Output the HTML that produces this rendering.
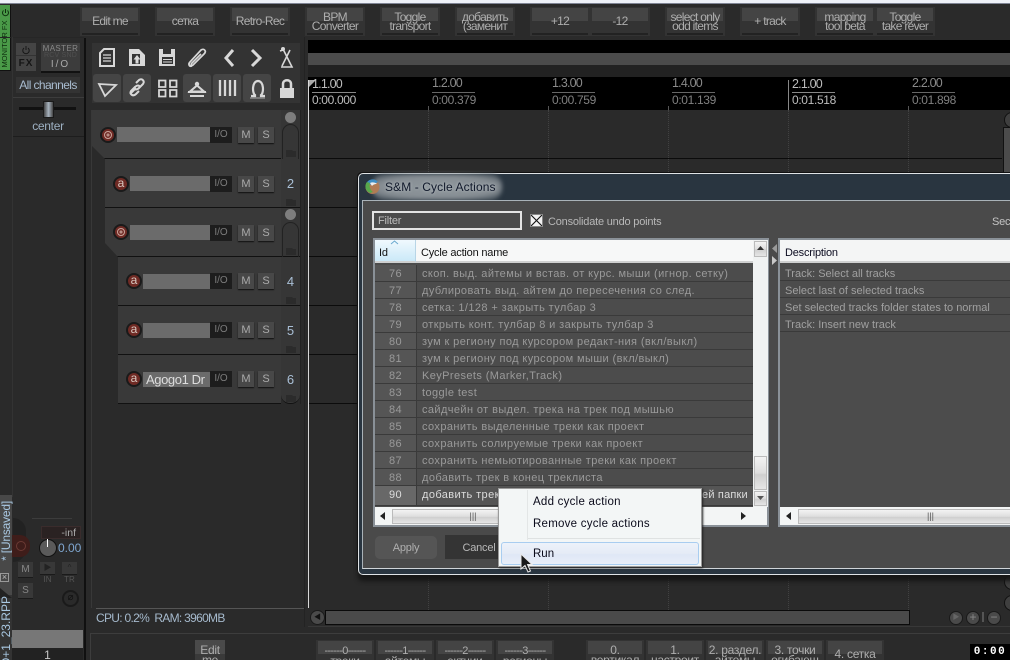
<!DOCTYPE html>
<html><head><meta charset="utf-8"><style>
html,body{margin:0;padding:0;background:#2a2a2a}
#p{position:relative;width:1010px;height:660px;overflow:hidden;background:#2a2a2a;font-family:"Liberation Sans","Noto Sans CJK SC",sans-serif;font-size:12px;color:#aaa}
#p div,#p svg{position:absolute}
.b{background:#333;text-align:center;color:#aeaeae;line-height:9px;font-size:12px;letter-spacing:-.7px}
.b i{position:absolute;left:2px;right:2px;top:1px;height:13px;background:#444}
.b u{position:absolute;left:2px;right:2px;bottom:1px;height:2px;background:#222}
.b span{position:relative;display:block;white-space:nowrap}
.c{line-height:10px;letter-spacing:-.3px}
.c em{font-style:normal;font-size:11px;letter-spacing:-.7px}
.tr{background:#393939;border-bottom:1px solid #111}
.nm{background:#6b6b6b;height:15px}
.io{background:#1d1d1d;width:22px;height:16px;text-align:center;color:#7c7c7c;font-size:10px;line-height:16px}
.ms{width:16px;height:16px;background:#484848;box-shadow:0 1px 1px #111;text-align:center;color:#aaa;font-size:11px;line-height:16px}
.rc{width:12px;height:12px;border-radius:50%;background:#6f2a24;border:2px solid #1a1a1a;color:#d8c8c0;text-align:center;line-height:11px;font-size:12px}
.n{left:281px;width:19px;text-align:center;color:#a9bfd6;font-size:13px}
.f{left:281px;width:19px;background:#363636}
.r{left:375px;width:378px;height:16px;border-bottom:1px solid #3a3a3a;background:#4c4c4c;color:#9a9a9a;font-size:11px;line-height:18px;white-space:nowrap;letter-spacing:.4px}
.r b{position:absolute;left:0;width:41px;height:16px;text-align:center;font-weight:normal;background:#555;border-right:1px solid #3a3a3a}
.r span{position:absolute;left:47px}
.d{left:780px;width:230px;height:16px;border-bottom:1px solid #3a3a3a;color:#a0a0a0;font-size:11px;line-height:18px;padding-left:5px;white-space:nowrap;box-sizing:border-box}
.rl{color:#8a8a8a;font-size:12.500px;white-space:nowrap;letter-spacing:-.8px}
.r2{color:#808080;font-size:12px;white-space:nowrap;letter-spacing:-.35px}
.t{width:1px;height:5px;background:#555;top:106px}
.v{width:0;border-left:1px dotted #414141;top:110px;height:500px}
.sb{background:linear-gradient(#f3f3f3,#dedede 50%,#cfcfcf 55%,#e6e6e6);border:1px solid #bbb;box-sizing:border-box}
.hb{background:#454545;border-radius:3px}
.dt{font-size:11px;letter-spacing:-.2px;line-height:14px;white-space:nowrap}
</style></head><body><div id="p">

<!-- top strip -->
<div style="left:0;top:0;width:1010px;height:3px;background:#eef1f8"></div>
<div style="left:0;top:3px;width:1010px;height:1px;background:#7f8494"></div>

<!-- top toolbar -->
<div class="b" style="left:80px;top:7px;width:60px;height:29px"><i></i><u></u><span style="top:10px">Edit me</span></div>
<div class="b" style="left:155px;top:7px;width:60px;height:29px"><i></i><u></u><span style="top:10px">сетка</span></div>
<div class="b" style="left:230px;top:7px;width:60px;height:29px"><i></i><u></u><span style="top:10px">Retro-Rec</span></div>
<div class="b" style="left:305px;top:7px;width:60px;height:29px"><i></i><u></u><span style="top:6px">BPM<br>Converter</span></div>
<div class="b" style="left:380px;top:7px;width:60px;height:29px"><i></i><u></u><span style="top:6px">Toggle<br>transport</span></div>
<div class="b" style="left:455px;top:7px;width:60px;height:29px"><i></i><u></u><span style="top:6px">добавить<br>(заменит</span></div>
<div class="b" style="left:530px;top:7px;width:60px;height:29px"><i></i><u></u><span style="top:10px">+12</span></div>
<div class="b" style="left:590px;top:7px;width:60px;height:29px"><i></i><u></u><span style="top:10px">-12</span></div>
<div class="b" style="left:665px;top:7px;width:60px;height:29px"><i></i><u></u><span style="top:6px">select only<br>odd items</span></div>
<div class="b" style="left:740px;top:7px;width:60px;height:29px"><i></i><u></u><span style="top:10px">+ track</span></div>
<div class="b" style="left:815px;top:7px;width:60px;height:29px"><i></i><u></u><span style="top:6px">mapping<br>tool beta</span></div>
<div class="b" style="left:875px;top:7px;width:60px;height:29px"><i></i><u></u><span style="top:6px">Toggle<br>take rever</span></div>

<!-- monitor fx -->
<div style="left:0;top:5px;width:10px;height:65px;background:#4a9a48;border-right:1px solid #111;border-bottom:1px solid #111"></div>
<div style="left:-22px;top:39px;width:54px;height:10px;transform:rotate(-90deg);color:#0d2c0d;font-size:7.500px;line-height:10px;text-align:center">MONITOR FX</div>
<svg style="left:1px;top:8px" width="9" height="9" fill="none" stroke="#0d2c0d"><path d="M2.500 2.500a3 3 0 1 0 4 0M4.500 1v4"/></svg>

<!-- dark dividers -->
<div style="left:84px;top:38px;width:2px;height:622px;background:#101010"></div>
<div style="left:0;top:37px;width:84px;height:1px;background:#262626"></div>

<!-- master strip -->
<div style="left:16px;top:43px;width:20px;height:28px;background:#444"></div>
<div style="left:16px;top:55px;width:20px;height:1px;background:#333"></div>
<div style="left:16px;top:57px;width:20px;text-align:center;color:#151515;font-size:10px;letter-spacing:1px;line-height:13px;font-weight:bold">FX</div>
<svg style="left:21px;top:45px" width="10" height="10" fill="none" stroke="#161616"><path d="M3 3a3.200 3.200 0 1 0 4 0M5 1v4"/></svg>
<div style="left:41px;top:43px;width:39px;height:28px;background:#3c3c3c;border-bottom:2px solid #111"></div>
<div style="left:41px;top:44px;width:39px;text-align:center;color:#888;font-size:8px;line-height:9px;letter-spacing:.4px">MASTER</div>
<div style="left:41px;top:52px;width:39px;text-align:center;color:#505050;font-size:7px;line-height:8px;letter-spacing:.2px">RCV SND</div>
<div style="left:41px;top:59px;width:39px;text-align:center;color:#aaa;font-size:10px;line-height:11px;letter-spacing:2px">I/O</div>
<div style="left:16px;top:77px;width:64px;height:16px;background:#333;text-align:center;color:#a9bcd0;font-size:12px;line-height:16px;white-space:nowrap;letter-spacing:-.6px">All channels</div>
<div style="left:12px;top:97px;width:72px;height:1px;background:#3c3c3c"></div>
<div style="left:19px;top:107px;width:57px;height:3px;background:#111"></div>
<div style="left:43px;top:101px;width:9px;height:15px;background:linear-gradient(90deg,#444,#a8b4c0 50%,#444);border:1px solid #1a1a1a"></div>
<div style="left:12px;top:119px;width:72px;text-align:center;color:#9db0c2;font-size:12px;line-height:14px;letter-spacing:-.3px">center</div>
<div style="left:12px;top:136px;width:72px;height:1px;background:#1d1d1d"></div>
<div style="left:12px;top:37px;width:1px;height:460px;background:#333"></div>

<!-- panel toolbar -->
<div style="left:92px;top:43px;width:208px;height:60px;background:#333"></div>
<div class="hb" style="left:93px;top:74px;width:28px;height:28px"></div>
<div class="hb" style="left:123px;top:74px;width:28px;height:28px"></div>
<div class="hb" style="left:183px;top:74px;width:28px;height:28px"></div>
<div class="hb" style="left:213px;top:74px;width:28px;height:28px"></div>
<div class="hb" style="left:243px;top:74px;width:28px;height:28px"></div>
<svg style="left:92px;top:43px" width="208" height="60" viewBox="92 43 208 60" fill="none" stroke="#d8d8d8" stroke-width="2">
<path d="M100 53l4-4h10v17h-14z"/><path d="M103 55h8M103 58h8M103 61h8" stroke-width="1.300"/>
<path d="M129 49h10l6 6v11h-16z" fill="#d8d8d8" stroke="none"/><path d="M132 54h8v10h-8z" fill="#333" stroke="none"/><path d="M137 55l3.500 4.500h-2v4h-3v-4h-2z" fill="#d8d8d8" stroke="none"/>
<path d="M159 49h16v17h-16z" fill="#d8d8d8" stroke="none"/><path d="M163 49h8v5h-8zM162 57h11v7h-11z" fill="#333" stroke="none"/><path d="M163 59.500h9M163 62h9" stroke-width="1"/>
<path d="M192 66c-3 1-4-2-2-4l11-12c3-2 6 1 3 4l-11 11c-1 1-3 0-1-2l9-9" stroke-width="1.700"/>
<path d="M233 50l-7 8 7 8" stroke-width="3"/><path d="M252 50l8 8-8 8" stroke-width="3"/>
<path d="M283 49l9 18h-11M290 50l-8 16M283 50l-3 1" stroke-width="1.600"/><circle cx="283" cy="49" r="2" fill="#d8d8d8" stroke="none"/>
<path d="M99 84l17 1-11 11z" stroke-width="1.800"/>
<path d="M130 94l6-6M136 83l3-3c3-2 6 1 4 4l-4 4c-2 2-4 2-5 0M139 91l-3 3c-3 3-7 0-5-3l4-4c2-2 4-2 5 0" stroke-width="2"/>
<path d="M159 80.500h6.500v6.500h-6.500zM170 80.500h6.500v6.500h-6.500zM159 90h6.500v6.500h-6.500zM170 90h6.500v6.500h-6.500z" stroke-width="1.800"/>
<path d="M190 91.500l7-6 7 6h-14z" fill="none"/><circle cx="197" cy="84" r="2.200" fill="#d8d8d8" stroke="none"/><path d="M188 92h18M190 96h14" stroke-width="2"/>
<path d="M220 80v16M225 80v16M230 80v16M235 80v16" stroke-width="2.300"/>
<path d="M251 96h4v-1c-3-2-3-14 3-14s6 12 3 14v1h4" stroke-width="2.200"/><path d="M250 98h15" stroke-width="1" stroke="#aaa"/>
<rect x="280" y="88" width="14" height="10" fill="#d8d8d8" stroke="none"/><path d="M283 88v-4c0-5 8-5 8 0v4" stroke-width="2.500"/>
</svg>

<!-- black/gray bands -->
<div style="left:308px;top:40px;width:702px;height:13px;background:#000"></div>
<div style="left:308px;top:53px;width:702px;height:12px;background:#4b4b4b"></div>
<div style="left:308px;top:65px;width:702px;height:12px;background:#222"></div>
<div style="left:308px;top:77px;width:702px;height:33px;background:#000"></div>

<!-- ruler -->
<svg style="left:308px;top:80px" width="9" height="8"><path d="M0 0h8L0 8z" fill="#aaa"/></svg>
<div class="rl" style="left:312px;top:77px;color:#bdbdbd">1.1.00</div>
<div style="left:312px;top:92px;width:44px;height:1px;background:#888"></div>
<div class="r2" style="left:312px;top:93px;color:#bdbdbd">0:00.000</div>
<div class="rl" style="left:432px;top:76px">1.2.00</div><div style="left:432px;top:92px;width:43px;height:1px;background:#666"></div><div class="r2" style="left:432px;top:93px">0:00.379</div>
<div class="rl" style="left:552px;top:76px">1.3.00</div><div style="left:552px;top:92px;width:43px;height:1px;background:#666"></div><div class="r2" style="left:552px;top:93px">0:00.759</div>
<div class="rl" style="left:672px;top:76px">1.4.00</div><div style="left:672px;top:92px;width:43px;height:1px;background:#666"></div><div class="r2" style="left:672px;top:93px">0:01.139</div>
<div class="rl" style="left:792px;top:77px;color:#bdbdbd">2.1.00</div><div style="left:792px;top:92px;width:43px;height:1px;background:#888"></div><div class="r2" style="left:792px;top:93px;color:#bdbdbd">0:01.518</div>
<div class="rl" style="left:912px;top:76px">2.2.00</div><div style="left:912px;top:92px;width:43px;height:1px;background:#666"></div><div class="r2" style="left:912px;top:93px">0:01.898</div>
<div style="left:788px;top:80px;width:1px;height:30px;background:#888"></div>
<div class="t" style="left:428px"></div><div class="t" style="left:548px"></div><div class="t" style="left:668px"></div><div class="t" style="left:908px"></div>

<!-- arrangement -->
<div class="v" style="left:428px"></div><div class="v" style="left:548px"></div><div class="v" style="left:668px"></div><div class="v" style="left:788px"></div><div class="v" style="left:908px"></div>
<div style="left:308px;top:80px;width:1px;height:528px;background:#d8d8d8"></div>
<div style="left:309px;top:158px;width:693px;height:1px;background:#0b0b0b"></div>
<div style="left:309px;top:207px;width:693px;height:1px;background:#0b0b0b"></div>
<div style="left:309px;top:256px;width:50px;height:1px;background:#0b0b0b"></div>
<div style="left:309px;top:305px;width:50px;height:1px;background:#0b0b0b"></div>
<div style="left:309px;top:354px;width:50px;height:1px;background:#0b0b0b"></div>
<div style="left:309px;top:403px;width:50px;height:1px;background:#0b0b0b"></div>
<div style="left:304px;top:37px;width:1px;height:590px;background:#232323"></div>
<div style="left:1003px;top:127px;width:7px;height:46px;background:#4b4b4b;border:1px solid #111;border-right:0;box-sizing:border-box"></div>
<div style="left:1004px;top:112px;width:14px;height:14px;border-radius:50%;background:#3f3f3f;border:1px solid #111"></div>
<div style="left:1004px;top:574px;width:14px;height:14px;border-radius:50%;background:#3f3f3f;border:1px solid #111"></div>
<div style="left:1004px;top:595px;width:14px;height:14px;border-radius:50%;background:#3f3f3f;border:1px solid #111"></div>

<!-- tracks -->
<div style="left:300px;top:110px;width:1px;height:294px;background:#222"></div>

<div class="tr" style="left:91px;top:110px;width:190px;height:48px;clip-path:polygon(0 0,100% 0,100% 100%,14px 100%,0 35px)"></div>
<div class="f" style="top:110px;height:49px"></div>
<div style="left:285px;top:112px;width:11px;height:11px;border-radius:50%;background:#7e7e7e"></div>
<div style="left:282px;top:124px;width:17px;height:35px;border:1px solid #222;border-bottom:0;border-radius:9px 9px 0 0;box-sizing:border-box"></div>
<div class="rc" style="left:100px;top:127px"><svg style="left:1px;top:1px" width="10" height="10" fill="none" stroke="#c9a49c"><circle cx="5" cy="5" r="3.500"/><circle cx="5" cy="5" r="1"/></svg></div>
<div class="nm" style="left:117px;top:127px;width:93px"></div>
<div class="io" style="left:210px;top:127px">I/O</div>
<div class="ms" style="left:238px;top:127px">M</div><div class="ms" style="left:258px;top:127px">S</div>

<div class="tr" style="left:105px;top:159px;width:176px;height:48px"></div>
<div class="f" style="top:159px;height:49px;border-bottom:1px solid #111;box-sizing:border-box"></div>
<div class="n" style="top:176px">2</div>
<div class="rc" style="left:113px;top:176px">a</div>
<div class="nm" style="left:130px;top:176px;width:80px"></div>
<div class="io" style="left:210px;top:176px">I/O</div>
<div class="ms" style="left:238px;top:176px">M</div><div class="ms" style="left:258px;top:176px">S</div>

<div class="tr" style="left:105px;top:208px;width:176px;height:48px;clip-path:polygon(0 0,100% 0,100% 100%,13px 100%,0 35px)"></div>
<div class="f" style="top:208px;height:49px;border-bottom:1px solid #111;box-sizing:border-box"></div>
<div style="left:285px;top:209px;width:11px;height:11px;border-radius:50%;background:#7e7e7e"></div>
<div style="left:282px;top:222px;width:17px;height:35px;border:1px solid #222;border-bottom:0;border-radius:9px 9px 0 0;box-sizing:border-box"></div>
<div class="rc" style="left:113px;top:224px"><svg style="left:1px;top:1px" width="10" height="10" fill="none" stroke="#c9a49c"><circle cx="5" cy="5" r="3.500"/><circle cx="5" cy="5" r="1"/></svg></div>
<div class="nm" style="left:130px;top:225px;width:80px"></div>
<div class="io" style="left:210px;top:225px">I/O</div>
<div class="ms" style="left:238px;top:225px">M</div><div class="ms" style="left:258px;top:225px">S</div>

<div class="tr" style="left:118px;top:257px;width:163px;height:48px"></div>
<div class="f" style="top:257px;height:49px;border-bottom:1px solid #111;box-sizing:border-box"></div>
<div class="n" style="top:274px">4</div>
<div class="rc" style="left:126px;top:273px">a</div>
<div class="nm" style="left:143px;top:274px;width:67px"></div>
<div class="io" style="left:210px;top:273px">I/O</div>
<div class="ms" style="left:238px;top:273px">M</div><div class="ms" style="left:258px;top:273px">S</div>

<div class="tr" style="left:118px;top:306px;width:163px;height:48px"></div>
<div class="f" style="top:306px;height:49px;border-bottom:1px solid #111;box-sizing:border-box"></div>
<div class="n" style="top:323px">5</div>
<div class="rc" style="left:126px;top:322px">a</div>
<div class="nm" style="left:143px;top:323px;width:67px"></div>
<div class="io" style="left:210px;top:322px">I/O</div>
<div class="ms" style="left:238px;top:322px">M</div><div class="ms" style="left:258px;top:322px">S</div>

<div class="tr" style="left:118px;top:355px;width:163px;height:48px"></div>
<div class="f" style="top:355px;height:49px;border-bottom:1px solid #111;box-sizing:border-box;border-radius:0 0 9px 9px"></div>
<div class="n" style="top:372px">6</div>
<div class="rc" style="left:126px;top:371px">a</div>
<div class="nm" style="left:143px;top:372px;width:67px;color:#ddd;font-size:13px;line-height:15px;text-indent:3px;white-space:nowrap;overflow:hidden;letter-spacing:-.4px">Agogo1 Dr</div>
<div class="io" style="left:210px;top:371px">I/O</div>
<div class="ms" style="left:238px;top:371px">M</div><div class="ms" style="left:258px;top:371px">S</div>

<!-- folder icons -->
<svg style="left:285px;top:145px" width="13" height="262" fill="#2b2b2b"><path d="M1 5h6l1 1h3v6H1zM1 54h6l1 1h3v6H1zM1 103h6l1 1h3v6H1zM1 152h6l1 1h3v6H1zM1 201h6l1 1h3v6H1zM1 250h6l1 1h3v6H1z"/></svg>

<!-- bottom of panel -->
<div style="left:91px;top:110px;width:1px;height:498px;background:#383838"></div>
<div style="left:96px;top:608px;width:208px;height:1px;background:#555"></div>
<div style="left:96px;top:611px;color:#a5b9cc;font-size:12px;line-height:14px;white-space:nowrap;letter-spacing:-.7px">CPU: 0.2%&nbsp; RAM: 3960MB</div>

<!-- mixer strip bottom-left -->
<div style="left:0;top:495px;width:12px;height:100px;background:#484848"></div>
<div style="left:0;top:595px;width:12px;height:65px;background:#333"></div>
<div style="left:0;top:588px;width:12px;height:10px;background:#222;clip-path:polygon(0 0,100% 100%,0 100%)"></div>
<div style="left:-32px;top:533px;width:76px;height:12px;transform:rotate(-90deg);color:#a9c8e2;font-size:12px;line-height:12px;white-space:nowrap;text-align:right;letter-spacing:-.2px">* [Unsaved]</div>
<div style="left:0;top:573px;width:9px;height:9px;border:1px solid #999;box-sizing:border-box;color:#bbb;font-size:9px;line-height:7px;text-align:center">×</div>
<div style="left:-36px;top:632px;width:84px;height:12px;transform:rotate(-90deg);color:#a9c8e2;font-size:12px;line-height:12px;white-space:nowrap;text-align:right">D+1_23.RPP</div>
<div style="left:13px;top:518px;width:13px;height:44px;background:#222;border-radius:0 22px 22px 0"></div>
<div style="left:12px;top:535px;width:18px;height:22px;background:#3f1d1a;border-radius:0 10px 10px 0"></div>
<div style="left:16px;top:541px;width:8px;height:8px;border:1px solid #6c3a34;border-radius:50%"></div>
<div style="left:32px;top:518px;width:40px;height:1px;background:#3c3c3c"></div>
<div style="left:41px;top:526px;width:40px;height:13px;background:#2a2222;border:1px solid #3a2c2c;box-sizing:border-box;color:#aaa;font-size:10.500px;line-height:12px;text-align:right;padding-right:4px">-inf</div>
<div style="left:39px;top:539px;width:16px;height:16px;border-radius:50%;background:#5a5a5a;border:1px solid #111"></div>
<div style="left:47px;top:539px;width:1px;height:8px;background:#fff"></div>
<div style="left:58px;top:541px;color:#7fa6cf;font-size:12px;line-height:14px">0.00</div>
<div style="left:18px;top:562px;width:15px;height:15px;background:#383838;border-bottom:1px solid #1a1a1a;text-align:center;font-size:10px;color:#888;line-height:15px">M</div>
<div style="left:18px;top:583px;width:15px;height:15px;background:#383838;border-bottom:1px solid #1a1a1a;text-align:center;font-size:10px;color:#888;line-height:15px">S</div>
<div style="left:40px;top:562px;width:15px;height:12px;background:#383838;border-bottom:1px solid #1a1a1a;text-align:center;font-size:8px;color:#222;line-height:12px">▶</div>
<div style="left:62px;top:562px;width:15px;height:12px;background:#383838;border-bottom:1px solid #1a1a1a;text-align:center;font-size:8px;color:#222;line-height:12px">^</div>
<div style="left:40px;top:575px;width:15px;text-align:center;font-size:8px;color:#555;line-height:10px">IN</div>
<div style="left:62px;top:575px;width:15px;text-align:center;font-size:8px;color:#555;line-height:10px">TR</div>
<div style="left:62px;top:590px;width:13px;height:13px;border-radius:50%;border:2px solid #1a1a1a;color:#111;text-align:center;font-size:10px;line-height:12px">⌀</div>
<div style="left:12px;top:630px;width:71px;height:18px;background:#777"></div>
<div style="left:12px;top:648px;width:71px;height:12px;background:#222;color:#c8c8c8;font-size:12px;line-height:14px;text-align:center">1</div>

<!-- bottom scroll -->
<div style="left:325px;top:610px;width:585px;height:15px;background:#4a4a4a;border:1px solid #0a0a0a;box-sizing:border-box"></div>
<div style="left:310px;top:610px;width:13px;height:13px;border-radius:50%;background:#4a4a4a;border:1px solid #1a1a1a;color:#111;font-size:7px;line-height:13px;text-align:center">◀</div>
<div style="left:949px;top:611px;width:12px;height:12px;border-radius:50%;background:#4a4a4a;border:1px solid #1a1a1a;color:#666;font-size:7px;line-height:12px;text-align:center">▶</div>
<div style="left:966px;top:611px;width:12px;height:12px;border-radius:50%;background:#4a4a4a;border:1px solid #1a1a1a;color:#888;font-size:12px;line-height:11px;text-align:center">+</div>
<div style="left:982px;top:612px;width:2px;height:10px;background:#555"></div>
<div style="left:987px;top:611px;width:12px;height:12px;border-radius:50%;background:#4a4a4a;border:1px solid #1a1a1a;color:#888;font-size:12px;line-height:11px;text-align:center">−</div>
<div style="left:308px;top:626px;width:702px;height:1px;background:#383838"></div>

<!-- bottom toolbar -->
<div style="left:90px;top:633px;width:920px;height:1px;background:#3d3d3d"></div>
<div style="left:90px;top:633px;width:1px;height:27px;background:#3d3d3d"></div>
<div class="b c" style="left:195px;top:640px;width:30px;height:20px;overflow:hidden;background:#3a3a3a"><i style="left:0;right:0;height:14px;top:0;background:#4a4a4a"></i><span style="top:5px">Edit<br>me</span></div>
<div class="b c" style="left:316px;top:640px;width:58px;height:20px;overflow:hidden"><i></i><span style="top:5px"><em>------0------</em><br>треки</span></div>
<div class="b c" style="left:376px;top:640px;width:58px;height:20px;overflow:hidden"><i></i><span style="top:5px"><em>------1------</em><br>айтемы</span></div>
<div class="b c" style="left:436px;top:640px;width:58px;height:20px;overflow:hidden"><i></i><span style="top:5px"><em>------2------</em><br>эктчии</span></div>
<div class="b c" style="left:496px;top:640px;width:58px;height:20px;overflow:hidden"><i></i><span style="top:5px"><em>------3------</em><br>регионы</span></div>
<div class="b c" style="left:586px;top:640px;width:58px;height:20px;overflow:hidden"><i></i><span style="top:5px">0.<br>вертикал</span></div>
<div class="b c" style="left:646px;top:640px;width:58px;height:20px;overflow:hidden"><i></i><span style="top:5px">1.<br>настроит</span></div>
<div class="b c" style="left:706px;top:640px;width:58px;height:20px;overflow:hidden"><i></i><span style="top:5px">2. раздел.<br>айтемы</span></div>
<div class="b c" style="left:766px;top:640px;width:58px;height:20px;overflow:hidden"><i></i><span style="top:5px">3. точки<br>огибающ</span></div>
<div class="b c" style="left:826px;top:640px;width:58px;height:20px;overflow:hidden"><i></i><span style="top:9px">4. сетка</span></div>
<div style="left:970px;top:644px;width:40px;height:16px;background:#000;color:#fff;font:bold 11px/16px 'Liberation Mono',monospace;text-align:center;letter-spacing:1.500px">0:00</div>

<!-- dialog -->
<div style="left:358px;top:173px;width:660px;height:402px;background:#293540;border:1px solid #dfe3e6;border-right:0;border-radius:5px 0 0 5px;box-sizing:border-box;box-shadow:-1px -1px 0 #111,0 6px 5px #161616"></div>
<div style="left:372px;top:174px;width:130px;height:26px;background:radial-gradient(ellipse at center,#8f979c 0,#868d93 65%,#3a4650 100%);border-radius:12px;filter:blur(2px)"></div>
<svg style="left:365px;top:179px" width="15" height="16"><circle cx="7.500" cy="8" r="7" fill="#b07c55"/><path d="M1 5a7 7 0 0 1 12-2L8 6z" fill="#3f8fc4"/><path d="M2 3a7 7 0 0 0 3 11l3-1C5 11 4 7 5 4z" fill="#58a84b"/><path d="M5 4c2-1 5-1 7 1-3 0-4 1-5 2z" fill="#eee"/></svg>
<div style="left:385px;top:180px;color:#10182a;font-size:12px;line-height:15px;white-space:nowrap;letter-spacing:.1px;text-shadow:0 0 3px #bfc5c9">S&amp;M - Cycle Actions</div>
<div style="left:362px;top:200px;width:648px;height:369px;background:#4a4a4a;border-top:1px solid #a9b2b8;border-left:1px solid #a9b2b8;border-bottom:1px solid #cfd4d8;box-sizing:border-box"></div>

<div class="dt" style="left:372px;top:211px;width:150px;height:19px;background:#4a4a4a;border:2px solid #e3e3e3;box-sizing:border-box;color:#bdbdbd;line-height:17px;padding-left:4px">Filter</div>
<div style="left:530px;top:214px;width:13px;height:13px;background:#555;border:1px solid #888;box-sizing:border-box"></div>
<svg style="left:531px;top:215px" width="11" height="11"><rect width="11" height="11" fill="#f2f2f2"/><path d="M0 0l11 11M11 0L0 11" stroke="#111" stroke-width="1.100"/></svg>
<div class="dt" style="left:548px;top:215px;color:#b8b8b8">Consolidate undo points</div>
<div class="dt" style="left:992px;top:215px;color:#c4c4c4">Sec</div>

<!-- left list -->
<div style="left:373px;top:238px;width:396px;height:289px;background:#4c4c4c;border:2px solid #8a9198;box-sizing:border-box"></div>
<div style="left:375px;top:240px;width:378px;height:23px;background:#f7f8f8;border-bottom:2px solid #cfd0d0;box-sizing:border-box"></div>
<div style="left:375px;top:240px;width:41px;height:23px;background:linear-gradient(#f0f9fe,#cbe9f8);border-right:1px solid #b8d5e6;border-bottom:2px solid #cfd0d0;box-sizing:border-box"></div>
<div class="dt" style="left:379px;top:246px;color:#111">Id</div>
<svg style="left:390px;top:240px" width="9" height="5"><path d="M1 4l3.500-3L8 4" fill="none" stroke="#6aa9cf"/></svg>
<div class="dt" style="left:421px;top:246px;color:#111">Cycle action name</div>

<div class="r" style="top:265px"><b>76</b><span>скоп. выд. айтемы и встав. от курс. мыши (игнор. сетку)</span></div>
<div class="r" style="top:282px"><b>77</b><span>дублировать выд. айтем до пересечения со след.</span></div>
<div class="r" style="top:299px"><b>78</b><span>сетка: 1/128 + закрыть тулбар 3</span></div>
<div class="r" style="top:316px"><b>79</b><span>открыть конт. тулбар 8 и закрыть тулбар 3</span></div>
<div class="r" style="top:333px"><b>80</b><span>зум к региону под курсором редакт-ния (вкл/выкл)</span></div>
<div class="r" style="top:350px"><b>81</b><span>зум к региону под курсором мыши (вкл/выкл)</span></div>
<div class="r" style="top:367px"><b>82</b><span>KeyPresets (Marker,Track)</span></div>
<div class="r" style="top:384px"><b>83</b><span>toggle test</span></div>
<div class="r" style="top:401px"><b>84</b><span>сайдчейн от выдел. трека на трек под мышью</span></div>
<div class="r" style="top:418px"><b>85</b><span>сохранить выделенные треки как проект</span></div>
<div class="r" style="top:435px"><b>86</b><span>сохранить солируемые треки как проект</span></div>
<div class="r" style="top:452px"><b>87</b><span>сохранить немьютированные треки как проект</span></div>
<div class="r" style="top:469px"><b>88</b><span>добавить трек в конец треклиста</span></div>
<div class="r" style="top:486px;height:19px;background:#555;color:#dcdcdc"><b style="height:19px;background:#686868;color:#ddd">90</b><span>добавить трек</span><span style="left:327px;letter-spacing:.2px">ей папки</span></div>

<!-- v scroll -->
<div style="left:753px;top:240px;width:15px;height:267px;background:#f0f2f2"></div>
<div class="sb" style="left:754px;top:241px;width:13px;height:16px"></div>
<svg style="left:757px;top:246px" width="8" height="5"><path d="M0 4l3.500-4L7 4z" fill="#333"/></svg>
<div class="sb" style="left:754px;top:456px;width:13px;height:34px"></div>
<div class="sb" style="left:754px;top:491px;width:13px;height:15px"></div>
<svg style="left:757px;top:496px" width="8" height="5"><path d="M0 0l3.500 4L7 0z" fill="#555"/></svg>
<!-- h scroll -->
<div style="left:375px;top:507px;width:392px;height:18px;background:#f3f5f5"></div>
<svg style="left:380px;top:512px" width="6" height="8"><path d="M5 0v8L0 4z" fill="#222"/></svg>
<div class="sb" style="left:392px;top:509px;width:162px;height:15px;color:#555;font-size:9px;line-height:13px;text-align:center">|||</div>
<svg style="left:741px;top:512px" width="6" height="8"><path d="M0 0v8l5-4z" fill="#222"/></svg>

<!-- splitter arrows -->
<svg style="left:771px;top:244px" width="7" height="22"><path d="M6 0v9L1 4.500z" fill="#9a9a9a"/><path d="M1 12v9l5-4.500z" fill="#c8c8c8"/></svg>

<!-- right list -->
<div style="left:778px;top:238px;width:240px;height:289px;background:#4c4c4c;border:2px solid #8a9198;box-sizing:border-box"></div>
<div style="left:780px;top:240px;width:230px;height:23px;background:#f4f5f5;border-bottom:2px solid #cfd0d0;box-sizing:border-box"></div>
<div class="dt" style="left:785px;top:246px;color:#0c0c20">Description</div>
<div class="d" style="top:265px">Track: Select all tracks</div>
<div class="d" style="top:282px">Select last of selected tracks</div>
<div class="d" style="top:299px">Set selected tracks folder states to normal</div>
<div class="d" style="top:316px">Track: Insert new track</div>
<div style="left:780px;top:507px;width:230px;height:18px;background:#f3f5f5"></div>
<svg style="left:786px;top:512px" width="6" height="8"><path d="M5 0v8L0 4z" fill="#222"/></svg>
<div class="sb" style="left:798px;top:509px;width:212px;height:15px;border-right:0;color:#555;font-size:9px;line-height:13px;padding-left:128px">|||</div>

<!-- buttons -->
<div class="dt" style="left:375px;top:536px;width:62px;height:23px;background:#555;border-radius:5px;text-align:center;color:#b0b0b0;line-height:25px">Apply</div>
<div class="dt" style="left:445px;top:535px;width:60px;height:24px;background:#343434;text-align:center;color:#b8b8b8;line-height:26px;text-indent:8px">Cancel</div>

<!-- context menu -->
<div style="left:498px;top:488px;width:204px;height:79px;background:#f3f6f6;border:1px solid #9a9a9a;box-sizing:border-box;box-shadow:1px 1px 2px #222"></div>
<div style="left:527px;top:490px;width:1px;height:50px;background:#e3e6e6"></div>
<div style="left:528px;top:538px;width:172px;height:1px;background:#dfe2e2"></div>
<div style="left:533px;top:495px;color:#0a0a1a;font-size:11.500px;line-height:14px;white-space:nowrap;letter-spacing:.25px">Add cycle action</div>
<div style="left:533px;top:517px;color:#0a0a1a;font-size:11.500px;line-height:14px;white-space:nowrap;letter-spacing:.25px">Remove cycle actions</div>
<div style="left:501px;top:542px;width:198px;height:23px;background:linear-gradient(#edf2fa,#e5ebf6 50%,#dfe7f6 55%,#e8eef8);border:1px solid #a9cdf0;border-radius:3px;box-sizing:border-box"></div>
<div style="left:533px;top:547px;color:#0a0a1a;font-size:11.500px;line-height:14px">Run</div>
<svg style="left:519px;top:553px" width="15" height="21"><path d="M2 1v15l4-3.500 3 6.500 2.500-1-3-6.500H13z" fill="#1a1a1a" stroke="#e8e8e8" stroke-width="1"/></svg>

</div></body></html>
